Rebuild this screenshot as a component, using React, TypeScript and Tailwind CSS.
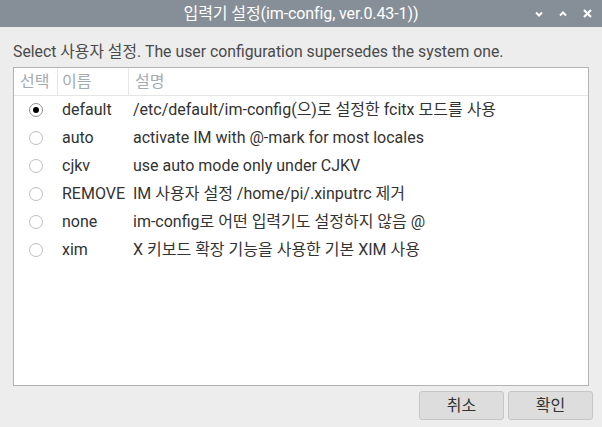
const rows = [
  { name: 'default', desc: '/etc/default/im-config(으)로 설정한 fcitx 모드를 사용', selected: true },
  { name: 'auto', desc: 'activate IM with @-mark for most locales' },
  { name: 'cjkv', desc: 'use auto mode only under CJKV' },
  { name: 'REMOVE', desc: 'IM 사용자 설정 /home/pi/.xinputrc 제거' },
  { name: 'none', desc: 'im-config로 어떤 입력기도 설정하지 않음 @' },
  { name: 'xim', desc: 'X 키보드 확장 기능을 사용한 기본 XIM 사용' },
]

const font = { fontFamily: 'Roboto, "Noto Sans CJK KR", sans-serif' }

const Radio = ({ on }: { on?: boolean }) => (
  <div
    className={`w-[14px] h-[14px] rounded-full border bg-white flex items-center justify-center ${
      on ? 'border-[#8f8f8f]' : 'border-[#bdbdbd]'
    }`}
  >
    {on && <div className="w-[6px] h-[6px] rounded-full bg-black" />}
  </div>
)

export default function App() {
  return (
    <div className="w-[602px] h-[427px] bg-[#ededed] flex flex-col overflow-hidden" style={font}>
      {/* Title bar */}
      <div className="h-[27px] bg-[#868e98] grid grid-cols-[1fr_auto_1fr] items-center">
        <div />
        <div className="text-white text-[16px] leading-[27px] tracking-[-0.1px]">입력기 설정(im-config, ver.0.43-1))</div>
        <div className="flex items-center justify-end pr-[10px] gap-[16px]">
          <svg width="8" height="6" viewBox="0 0 8 6">
            <path d="M1 1.5 L4 4.5 L7 1.5" stroke="white" strokeWidth="2" fill="none" />
          </svg>
          <svg width="8" height="6" viewBox="0 0 8 6">
            <path d="M1 4.5 L4 1.5 L7 4.5" stroke="white" strokeWidth="2" fill="none" />
          </svg>
          <svg width="9" height="9" viewBox="0 0 9 9">
            <path d="M1 1 L8 8 M8 1 L1 8" stroke="white" strokeWidth="2.2" fill="none" />
          </svg>
        </div>
      </div>

      {/* Body */}
      <div className="px-[13px]">
        <p className="mt-[15px] mb-[6px] text-[15.8px] leading-[19px] text-[#4a4a4a]">
          Select 사용자 설정. The user configuration supersedes the system one.
        </p>

        <div className="h-[319px] bg-white border border-[#b3b3b3]">
          {/* Header */}
          <div className="flex h-[28px] border-b border-[#e6e6e6] text-[16px] text-[#a3abb3]">
            <div className="w-[44px] border-r border-[#e6e6e6] pl-[6px] flex items-center">선택</div>
            <div className="w-[71px] border-r border-[#e6e6e6] pl-[4px] flex items-center">이름</div>
            <div className="flex-1 pl-[6px] flex items-center">설명</div>
          </div>

          {rows.map((r) => (
            <div key={r.name} className="flex h-[28px] text-[16px] text-[#333333]">
              <div className="w-[43px] flex items-center justify-center">
                <Radio on={r.selected} />
              </div>
              <div className="w-[72px] pl-[5px] flex items-center">{r.name}</div>
              <div className="flex-1 pl-[4px] flex items-center whitespace-nowrap">{r.desc}</div>
            </div>
          ))}
        </div>
      </div>

      {/* Buttons */}
      <div className="flex justify-end gap-[4px] pr-[9px] mt-[5px]">
        {['취소', '확인'].map((b) => (
          <button
            key={b}
            className="w-[85px] h-[29px] rounded-[3px] border border-[#c6c6c6] bg-[#dddddd] text-[16px] text-[#333333]"
          >
            {b}
          </button>
        ))}
      </div>
    </div>
  )
}
